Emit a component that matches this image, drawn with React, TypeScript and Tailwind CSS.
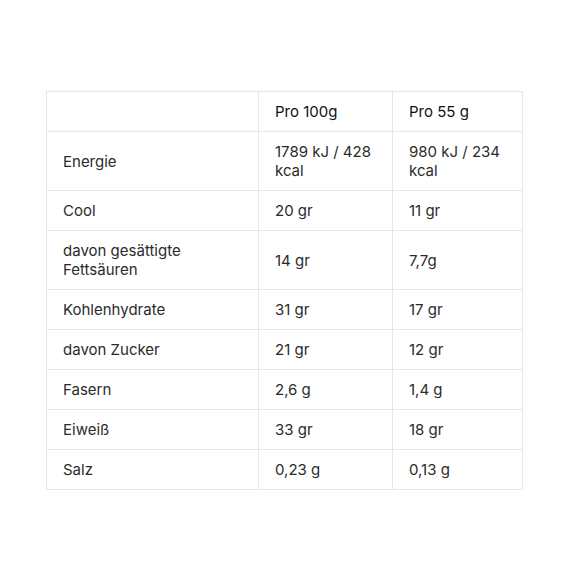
const rows: [string, string, string][] = [
  ["Energie", "1789 kJ / 428 kcal", "980 kJ / 234 kcal"],
  ["Cool", "20 gr", "11 gr"],
  ["davon gesättigte Fettsäuren", "14 gr", "7,7g"],
  ["Kohlenhydrate", "31 gr", "17 gr"],
  ["davon Zucker", "21 gr", "12 gr"],
  ["Fasern", "2,6 g", "1,4 g"],
  ["Eiweiß", "33 gr", "18 gr"],
  ["Salz", "0,23 g", "0,13 g"],
];

export default function App() {
  return (
    <div className="w-[570px] h-[570px] bg-white pt-[91px] pl-[46px] font-['Inter',sans-serif]">
      <table className="w-[476px] border-collapse table-fixed text-[15px] leading-[19px] text-[#2b2b2b]">
        <colgroup>
          <col className="w-[212px]" />
          <col className="w-[134px]" />
          <col className="w-[130px]" />
        </colgroup>
        <thead>
          <tr className="text-[#111]">
            <th className="border border-[#e6e6e6] px-4 py-[10px] font-normal text-left"></th>
            <th className="border border-[#e6e6e6] px-4 py-[10px] font-normal text-left">Pro 100g</th>
            <th className="border border-[#e6e6e6] px-4 py-[10px] font-normal text-left">Pro 55 g</th>
          </tr>
        </thead>
        <tbody>
          {rows.map(([label, a, b]) => (
            <tr key={label}>
              <td className="border border-[#e6e6e6] px-4 py-[10px] align-middle">{label}</td>
              <td className="border border-[#e6e6e6] px-4 py-[10px] align-middle">{a}</td>
              <td className="border border-[#e6e6e6] px-4 py-[10px] align-middle">{b}</td>
            </tr>
          ))}
        </tbody>
      </table>
    </div>
  );
}
